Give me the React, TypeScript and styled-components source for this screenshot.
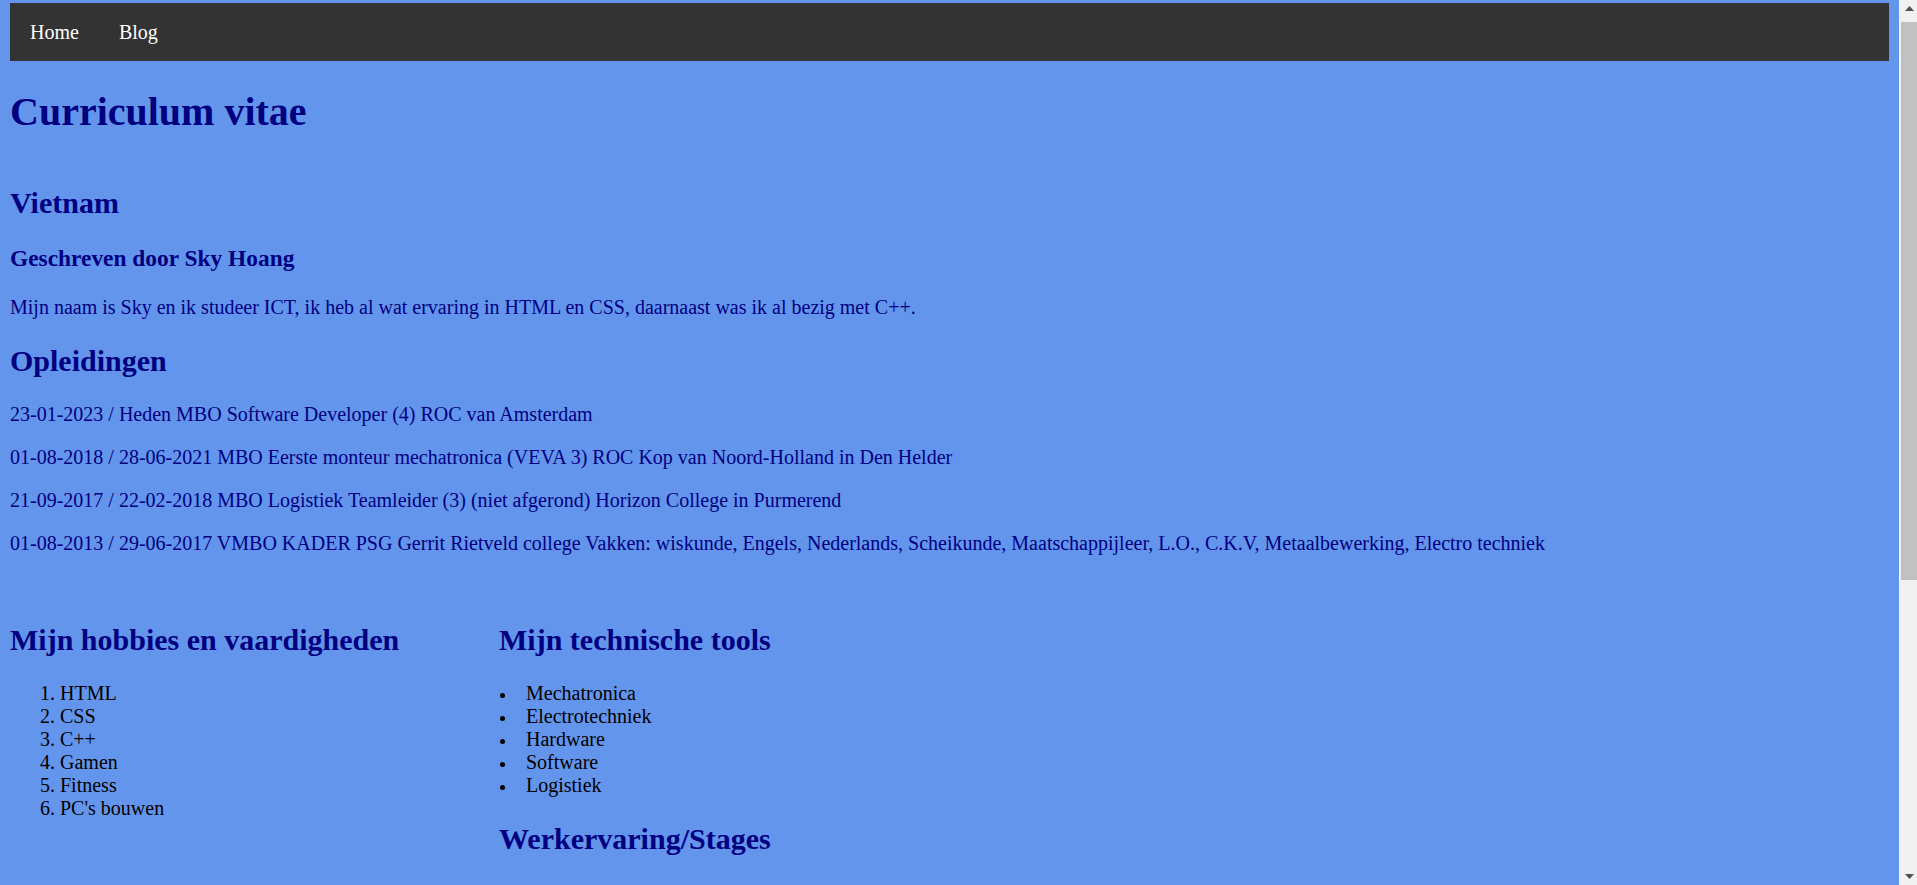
import React from "react";
import styled, { createGlobalStyle } from "styled-components";

const GlobalStyle = createGlobalStyle`
  html {
    background: #6495ed;
  }
  body {
    margin: 3px 28px 10px 10px;
    background: #6495ed;
    font-family: "Liberation Serif", "Times New Roman", serif;
    font-size: 20px;
    color: #000080;
  }
`;

const Page = styled.div`
  min-height: 1330px;
`;

const NavBar = styled.nav`
  display: flex;
  background: #333;
  overflow: hidden;
`;

const NavLink = styled.a`
  display: block;
  color: #ffffff;
  padding: 17.5px 20px;
  font-size: 20px;
  text-decoration: none;
`;

const Header = styled.header`
  display: flow-root;
`;

const Title = styled.h1`
  font-size: 40px;
  margin: 0.67em 0;
  font-weight: bold;
  color: #000080;
`;

const SectionTitle = styled.h2`
  font-size: 30px;
  margin: 0.83em 0;
  font-weight: bold;
  color: #000080;
`;

const Byline = styled.h3`
  font-size: 23.4px;
  margin: 1em 0;
  font-weight: bold;
  color: #000080;
`;

const Text = styled.p`
  font-size: 20px;
  margin: 1em 0;
  color: #000080;
`;

const Columns = styled.div`
  display: grid;
  grid-template-columns: 489px 1fr;
  margin-top: 44px;
`;

const Column = styled.div``;

const NumberedList = styled.ol`
  margin: 1em 0;
  padding-left: 50px;
  color: #000000;
`;

const BulletList = styled.ul`
  margin: 1em 0;
  padding-left: 0;
  list-style: none;
  color: #000000;
`;

const Item = styled.li`
  font-size: 20px;
`;

const BulletItem = styled.li`
  font-size: 20px;
  &::before {
    content: "";
    display: inline-block;
    width: 5px;
    height: 5px;
    border-radius: 50%;
    background: #000000;
    margin: 0 21px 0 1px;
    vertical-align: 2px;
  }
`;

/* Fake window scrollbar drawn over the right edge, as in the screenshot */
const ScrollBar = styled.div`
  position: fixed;
  top: 0;
  right: 0;
  width: 18px;
  height: 100vh;
  background: #f1f1f1;
  display: flex;
  flex-direction: column;
`;

const ScrollButton = styled.div`
  height: 17px;
  flex: none;
  display: flex;
  align-items: center;
  justify-content: center;
  padding-left: 2px;
`;

const ScrollTrack = styled.div`
  flex: 1;
  padding: 5px 0 0 2px;
`;

const ScrollThumb = styled.div`
  height: 558px;
  background: #c1c1c1;
`;

const opleidingen = [
  "23-01-2023 / Heden MBO Software Developer (4) ROC van Amsterdam",
  "01-08-2018 / 28-06-2021 MBO Eerste monteur mechatronica (VEVA 3) ROC Kop van Noord-Holland in Den Helder",
  "21-09-2017 / 22-02-2018 MBO Logistiek Teamleider (3) (niet afgerond) Horizon College in Purmerend",
  "01-08-2013 / 29-06-2017 VMBO KADER PSG Gerrit Rietveld college Vakken: wiskunde, Engels, Nederlands, Scheikunde, Maatschappijleer, L.O., C.K.V, Metaalbewerking, Electro techniek",
];

const hobbies = ["HTML", "CSS", "C++", "Gamen", "Fitness", "PC's bouwen"];
const tools = ["Mechatronica", "Electrotechniek", "Hardware", "Software", "Logistiek"];

export default function App() {
  return (
    <>
      <GlobalStyle />
      <Page>
        <NavBar>
          <NavLink href="#">Home</NavLink>
          <NavLink href="#">Blog</NavLink>
        </NavBar>
        <Header>
          <Title>Curriculum vitae</Title>
        </Header>
        <section>
          <SectionTitle>Vietnam</SectionTitle>
          <Byline>Geschreven door Sky Hoang</Byline>
          <Text>
            Mijn naam is Sky en ik studeer ICT, ik heb al wat ervaring in HTML en CSS, daarnaast was ik al bezig met C++.
          </Text>
          <SectionTitle>Opleidingen</SectionTitle>
          {opleidingen.map((o) => (
            <Text key={o}>{o}</Text>
          ))}
        </section>
        <Columns>
          <Column>
            <SectionTitle>Mijn hobbies en vaardigheden</SectionTitle>
            <NumberedList>
              {hobbies.map((h) => (
                <Item key={h}>{h}</Item>
              ))}
            </NumberedList>
          </Column>
          <Column>
            <SectionTitle>Mijn technische tools</SectionTitle>
            <BulletList>
              {tools.map((t) => (
                <BulletItem key={t}>{t}</BulletItem>
              ))}
            </BulletList>
            <SectionTitle>Werkervaring/Stages</SectionTitle>
          </Column>
        </Columns>
      </Page>
      <ScrollBar aria-hidden="true">
        <ScrollButton>
          <svg width="9" height="5" viewBox="0 0 9 5">
            <path d="M0 5 L4.5 0 L9 5 Z" fill="#505050" />
          </svg>
        </ScrollButton>
        <ScrollTrack>
          <ScrollThumb />
        </ScrollTrack>
        <ScrollButton>
          <svg width="9" height="5" viewBox="0 0 9 5">
            <path d="M0 0 L4.5 5 L9 0 Z" fill="#505050" />
          </svg>
        </ScrollButton>
      </ScrollBar>
    </>
  );
}
